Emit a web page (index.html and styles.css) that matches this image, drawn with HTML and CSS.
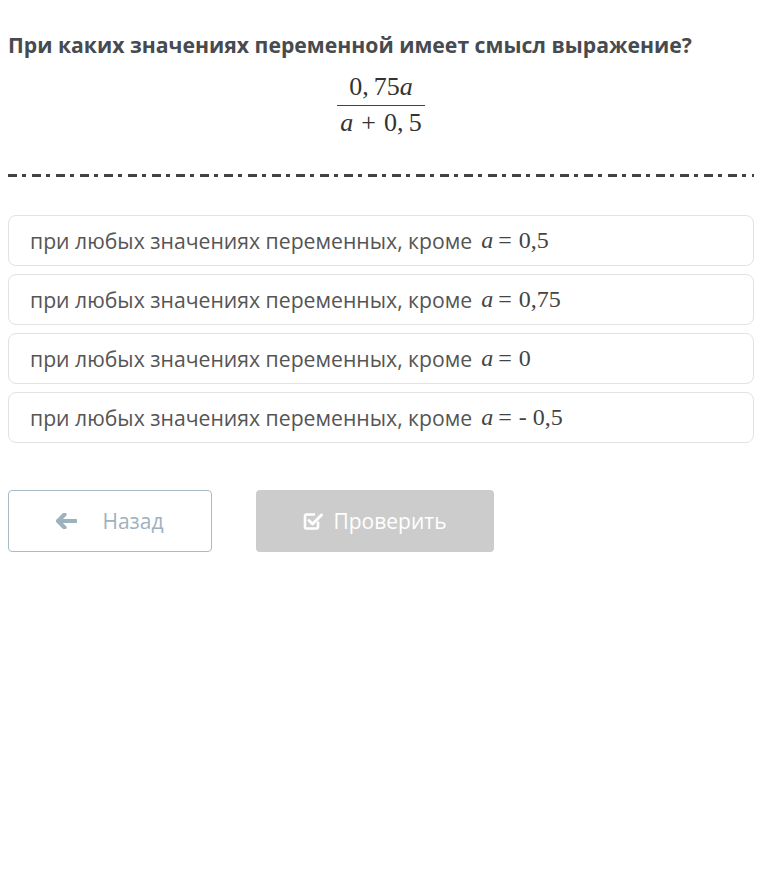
FILE: index.html
```html
<!DOCTYPE html>
<html>
  <head>
    <title>Задание</title>
    <link rel="stylesheet" href="styles.css">
  </head>
  <body>
    <div class="task">
      <div class="question">При каких значениях переменной имеет смысл выражение?</div>
      <div class="formula">
        <div class="frac">
          <div class="num">0,&thinsp;75<i>a</i></div>
          <div class="den"><i>a</i><span class="op">+</span>0,&thinsp;5</div>
        </div>
      </div>
      <div class="dashes"></div>
      <div class="answers">
        <div class="answer">при любых значениях переменных, кроме <span class="math"><i>a</i><span class="eq">=</span>0,5</span></div>
        <div class="answer">при любых значениях переменных, кроме <span class="math"><i>a</i><span class="eq">=</span>0,75</span></div>
        <div class="answer">при любых значениях переменных, кроме <span class="math"><i>a</i><span class="eq">=</span>0</span></div>
        <div class="answer">при любых значениях переменных, кроме <span class="math"><i>a</i><span class="eq">=</span>- 0,5</span></div>
      </div>
      <div class="buttons">
        <div class="btn btn-back">
          <svg width="21" height="16" viewBox="0 0 21 16"><path d="M8.5 1.5 L2 8 L8.5 14.5 M3 8 H19.5" fill="none" stroke="#9db2bf" stroke-width="4.2" stroke-linecap="round" stroke-linejoin="round"/></svg>
          <span>Назад</span>
        </div>
        <div class="btn btn-check">
          <svg width="22" height="20" viewBox="0 0 22 20"><path d="M15 10.5 V16 a1.5 1.5 0 0 1 -1.5 1.5 H3.5 A1.5 1.5 0 0 1 2 16 V5 A1.5 1.5 0 0 1 3.5 3.5 H12" fill="none" stroke="#fff" stroke-width="2.6"/><path d="M6 9.5 L9.5 13 L18.5 4" fill="none" stroke="#fff" stroke-width="3" stroke-linecap="round" stroke-linejoin="round"/></svg>
          <span>Проверить</span>
        </div>
      </div>
    </div>
  </body>
</html>
```

FILE: styles.css
```css
body {
  margin: 0;
  background-color: #fff;
  font-family: "Open Sans", sans-serif;
  color: #444;
}
.task {
  padding: 30px 27px 0 8px;
}
.question {
  font-size: 21.2px;
  font-weight: bold;
  color: #474b4f;
}
.formula {
  display: flex;
  justify-content: center;
  margin-top: 14px;
}
.frac {
  font-family: "Liberation Serif", serif;
  font-size: 26px;
  color: #333;
  text-align: center;
  line-height: 28px;
}
.num {
  padding: 0 3px 4px;
  border-bottom: 1.5px solid #444;
}
.den {
  padding: 3px 3px 0;
}
.op {
  margin: 0 8px;
}
.dashes {
  margin-top: 37px;
  height: 3px;
  background: repeating-linear-gradient(90deg, #444 0 9px, transparent 9px 14px, #444 14px 18px, transparent 18px 24px);
}
.answers {
  margin-top: 38px;
  display: flex;
  flex-direction: column;
  gap: 8px;
}
.answer {
  border: 1px solid #e2e2e2;
  border-radius: 8px;
  height: 49px;
  display: flex;
  align-items: center;
  padding-left: 21px;
  font-size: 21.2px;
  color: #555;
}
.math {
  font-family: "Liberation Serif", serif;
  color: #444;
  margin-left: 9px;
  font-size: 24px;
}
.eq {
  margin: 0 7px 0 5px;
}
.buttons {
  display: flex;
  gap: 44px;
  margin-top: 47px;
}
.btn {
  height: 60px;
  border-radius: 4px;
  display: flex;
  align-items: center;
  justify-content: center;
  font-size: 21px;
}
.btn-back {
  width: 202px;
  border: 1px solid #a9bbc6;
  color: #9db2bf;
  gap: 25px;
}
.btn-check {
  width: 238px;
  height: 62px;
  background: #cccccc;
  color: #fff;
  gap: 8px;
}
```
